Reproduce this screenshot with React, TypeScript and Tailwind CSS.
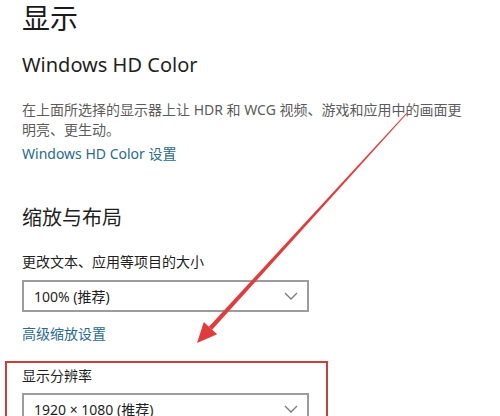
const font = { fontFamily: '"Noto Sans", "Noto Sans CJK SC", sans-serif' }

const Chevron = () => (
  <svg width="14" height="8" viewBox="0 0 14 8" className="text-[#7a7a7a]">
    <path d="M1 1 L7 7 L13 1" fill="none" stroke="currentColor" strokeWidth="1.3" />
  </svg>
)

const Dropdown = ({ value }: { value: string }) => (
  <div className="flex items-center justify-between w-[287px] h-8 border-2 border-[#9c9c9c] bg-white pl-[10px] pr-[9px]">
    <span className="text-[14px] text-[#1f1f1f]">{value}</span>
    <Chevron />
  </div>
)

export default function App() {
  return (
    <div className="relative w-[500px] h-[416px] overflow-hidden bg-white" style={font}>
      <div className="flex flex-col pl-[22px]">
        <h1 className="text-[28px] leading-[36px] text-[#1a1a1a]">显示</h1>
        <h2 className="mt-[15px] text-[20px] leading-[28px] text-[#1f1f1f]">Windows HD Color</h2>
        <p className="mt-[21px] text-[14px] leading-[20px] text-[#5c5c5c]">
          在上面所选择的显示器上让 HDR 和 WCG 视频、游戏和应用中的画面更
          <br />
          明亮、更生动。
        </p>
        <a className="mt-1 text-[14px] leading-[20px] text-[#2b6a8c]">Windows HD Color 设置</a>
        <h2 className="mt-10 text-[20px] leading-[28px] text-[#1f1f1f]">缩放与布局</h2>
        <div className="mt-5 text-[14px] leading-[20px] text-[#1f1f1f]">更改文本、应用等项目的大小</div>
        <div className="mt-2">
          <Dropdown value="100% (推荐)" />
        </div>
        <a className="mt-3 text-[14px] leading-[20px] text-[#2b6a8c]">高级缩放设置</a>
        <div className="mt-[17px] ml-[-17px] w-[323px] h-[80px] border-2 border-[#cc3d3d] pl-[15px] pt-[3px]">
          <div className="text-[14px] leading-[20px] text-[#1f1f1f]">显示分辨率</div>
          <div className="mt-[7px]">
            <Dropdown value="1920 × 1080 (推荐)" />
          </div>
        </div>
      </div>
      <svg className="absolute left-0 top-0 pointer-events-none" width="500" height="416" viewBox="0 0 500 416">
        <polygon points="407.4,113.3 406.6,112.7 208.9,326.7 212.1,329.7" fill="#e23b3b" />
        <polygon points="197,343 203.8,322.1 217.1,334.3" fill="#e23b3b" />
      </svg>
    </div>
  )
}
